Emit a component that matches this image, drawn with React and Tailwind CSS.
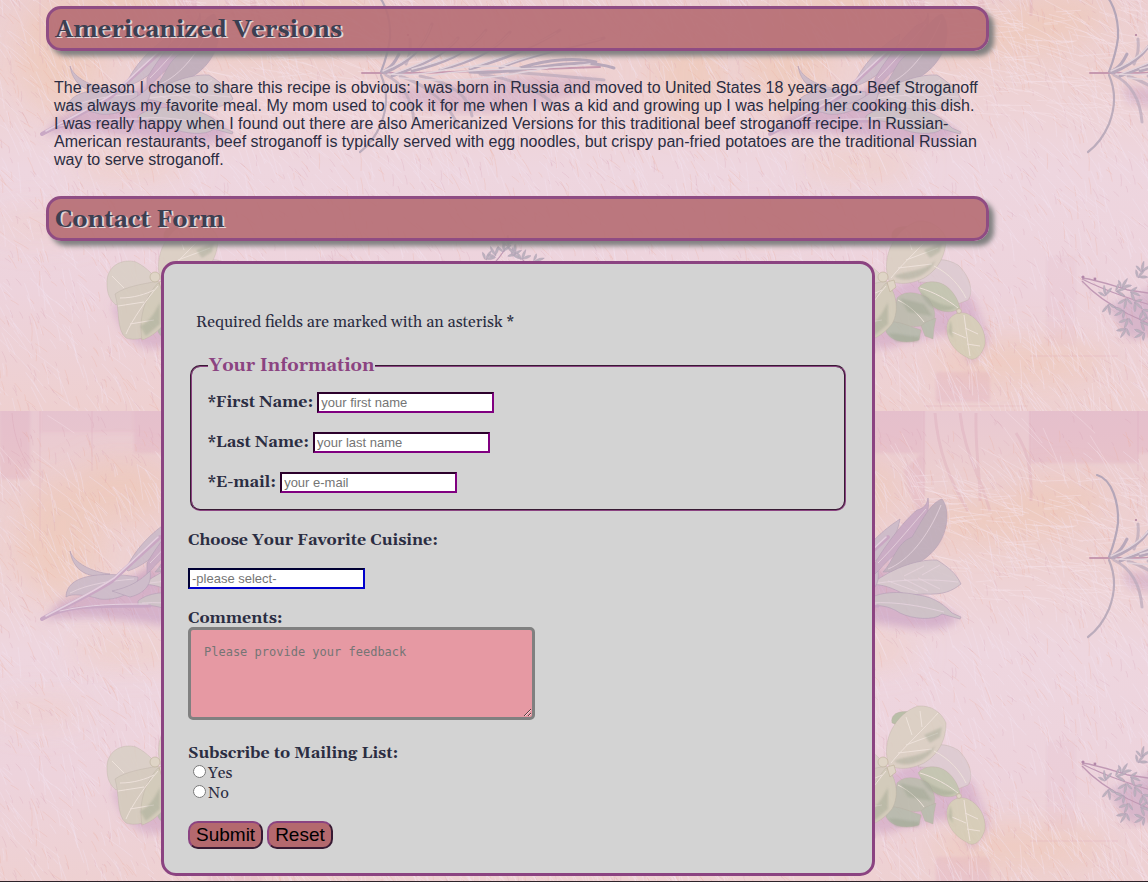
const TILE_W = 728;
const TILE_H = 485;

function makeRandom(seed) {
  let s = seed;
  return () => {
    s = (s * 16807) % 2147483647;
    return s / 2147483647;
  };
}

function scratchPath(seed, count, area, angle, spread, length) {
  const rnd = makeRandom(seed);
  let d = "";
  for (let i = 0; i < count; i++) {
    const x = area[0] + rnd() * area[2];
    const y = area[1] + rnd() * area[3];
    const a = ((angle + (rnd() - 0.5) * spread) * Math.PI) / 180;
    const l = length * (0.3 + rnd());
    const dx = Math.cos(a) * l;
    const dy = Math.sin(a) * l;
    d += `M${x.toFixed(1)} ${y.toFixed(1)}q${(dx / 2 + 1).toFixed(1)} ${(dy / 2).toFixed(1)} ${dx.toFixed(1)} ${dy.toFixed(1)}`;
  }
  return d;
}

const fineLight = scratchPath(11, 1700, [-20, 40, 768, 450], 60, 50, 28);
const fineDark = scratchPath(23, 1200, [-20, 0, 768, 485], 60, 60, 9);
const fineOrange = scratchPath(31, 1100, [-20, 20, 768, 460], 60, 60, 14);
const longLight = scratchPath(47, 130, [0, 0, 728, 200], 48, 40, 60);
const crossLight = scratchPath(59, 160, [180, 60, 220, 130], 10, 40, 36);
const lowLight = scratchPath(71, 200, [150, 380, 578, 105], 64, 50, 44);

function Board() {
  return (
    <>
      <rect width={TILE_W} height={TILE_H} fill="url(#wood)" />
      <g fill="#d79db8" opacity="0.24" filter="url(#edge)">
        <rect x="0" y="-8" width="30" height="76" />
        <rect x="40" y="-8" width="94" height="30" opacity="0.6" />
        <rect x="134" y="-8" width="62" height="50" />
        <rect x="302" y="-8" width="108" height="60" />
        <rect x="410" y="-8" width="40" height="50" />
        <rect x="560" y="-8" width="168" height="40" opacity="0.7" />
        <path d="M175 60L196 40V110L185 90Z" />
        <rect x="208" y="446" width="54" height="30" />
        <rect x="318" y="330" width="30" height="90" opacity="0.4" />
      </g>
      <g fill="#f0bf98" opacity="0.3" filter="url(#softer)">
        <ellipse cx="60" cy="130" rx="40" ry="60" />
        <ellipse cx="130" cy="240" rx="60" ry="14" />
        <ellipse cx="270" cy="110" rx="80" ry="20" />
        <ellipse cx="330" cy="90" rx="50" ry="22" />
        <ellipse cx="120" cy="80" rx="50" ry="30" />
        <ellipse cx="690" cy="150" rx="34" ry="50" />
        <ellipse cx="290" cy="435" rx="90" ry="22" />
        <ellipse cx="40" cy="300" rx="50" ry="14" opacity="0.6" />
      </g>
      <g fill="none" stroke="#cf91a6" opacity="0.22">
        <path d="M207 2C210 40 222 70 240 100M232 2C236 40 250 60 262 100M248 2C247 40 252 60 252 90M288 22C300 40 304 60 303 90" strokeWidth="3" />
        <path d="M12 2C14 30 24 50 34 60M40 0V130M92 0V60M196 0V90M302 0V70M410 0V60" />
        <path d="M196 480H300M302 430H390" />
      </g>
      <g fill="none" strokeLinecap="round">
        <path d={fineDark} stroke="#cf8fa6" strokeWidth="0.7" opacity="0.26" />
        <path d={fineOrange} stroke="#e9ab9b" strokeWidth="0.7" opacity="0.34" />
        <path d={fineLight} stroke="#f3e3ee" strokeWidth="0.7" opacity="0.55" />
        <path d={crossLight} stroke="#f5e2ea" strokeWidth="0.7" opacity="0.6" />
        <path d={longLight} stroke="#f4e0e8" strokeWidth="0.8" opacity="0.5" />
        <path d={lowLight} stroke="#f5e2ec" strokeWidth="0.7" opacity="0.6" />
      </g>
    </>
  );
}

function Sage() {
  return (
    <g>
      <path d="M44 210C90 200 150 214 190 218C215 220 228 212 232 206L150 160L60 190Z" fill="#a873ae" opacity="0.42" filter="url(#soft)" />
      <path d="M130 175C150 150 170 120 190 100L214 92L212 130L150 175Z" fill="#b583b2" opacity="0.32" filter="url(#soft)" />
      <g fill="#c9b9c8" stroke="#a893ae" strokeWidth="0.6">
        <path d="M70 140C74 152 92 161 110 163C96 168 74 165 70 140Z" />
        <path d="M66 186C66 164 100 160 138 166C138 182 116 190 100 188C86 184 72 182 66 186Z" />
        <path d="M126 158C134 140 150 122 172 108C168 130 156 150 128 160Z" />
        <path d="M147 152C160 130 178 108 189 99C195 98 199 94 200 87C203 104 192 122 180 132C166 144 158 150 147 164Z" fill="#c5a6c2" />
        <path d="M155 161C166 150 168 132 184 126C194 110 202 92 214 88C222 98 220 120 210 134C198 152 174 162 155 161Z" fill="#bbabb9" />
        <path d="M142 174C160 160 186 148 209 149C220 156 228 162 233 173C224 180 216 184 196 183L178 184C166 178 154 172 142 174Z" fill="#d3c6cb" />
        <path d="M138 190C150 180 172 180 190 184C208 186 218 196 224 202L233 206L232 208L214 203C206 210 184 208 172 202C160 194 150 194 138 195Z" fill="#c9bec5" />
        <path d="M112 180C130 176 140 170 150 160C152 172 146 182 130 186Z" />
      </g>
      <g fill="none" stroke="#e6d4e0" strokeWidth="0.8">
        <path d="M150 172C180 168 204 168 230 171M160 170L190 181M176 168L200 180M190 167L212 178M176 165L196 155M194 164L212 154" />
        <path d="M160 158C180 150 200 126 213 94M142 192C170 190 196 196 216 201M150 152C168 134 184 114 198 98M70 182C90 172 112 170 134 168" />
      </g>
      <g fill="none" stroke="#c3a0c1" strokeLinecap="round">
        <path d="M42 208C64 196 90 184 112 170L160 126" strokeWidth="4" />
        <path d="M42 208C70 192 110 196 150 195" strokeWidth="3" />
        <path d="M46 205C66 194 92 182 114 167L158 126" stroke="#e3cfe0" strokeWidth="1.6" />
        <path d="M60 200C90 193 120 193 148 193" stroke="#e3cfe0" />
      </g>
    </g>
  );
}

function Rosemary() {
  return (
    <g fill="none" strokeLinecap="round">
      <path d="M392 160C440 166 480 150 540 150C580 150 600 152 606 158C560 176 480 200 400 176Z" fill="#b07fb0" opacity="0.35" filter="url(#soft)" />
      <path d="M369 64C384 68 391 92 390 112C388 128 384 138 381 146" stroke="#ab9fb4" strokeWidth="2.2" />
      <path d="M381 149C388 165 388 180 381 198C375 212 368 220 360 226" stroke="#b3a5b6" strokeWidth="2.2" />
      <path d="M362 147H420L600 141" stroke="#c08fa9" strokeWidth="2" />
      <g stroke="#afa1b6" strokeWidth="3">
        <path d="M382 146C392 142 396 134 399 128M384 147C410 136 424 122 432 98M392 150C420 140 444 130 458 112" />
        <path d="M412 145C440 138 470 128 486 104M440 144C470 136 494 126 510 106M470 143C500 134 530 124 560 104" />
        <path d="M500 142C530 128 580 120 604 112M520 142C550 132 580 132 596 136M470 146C520 150 570 128 614 142" />
        <path d="M386 149C400 156 412 170 414 196M400 150C430 160 450 180 458 200M420 150C450 156 470 170 472 190" opacity="0.7" />
        <path d="M480 148C510 152 540 164 556 180M510 146C540 148 580 152 604 154M410 113C411 122 410 130 406 138" opacity="0.7" />
      </g>
      <g stroke="#e0d3dc" strokeWidth="1.5">
        <path d="M383 145C410 134 424 121 431 100M392 148C420 138 444 128 457 113M412 143C440 136 469 127 485 106" />
        <path d="M440 143C470 134 494 124 509 108M470 142C502 130 530 122 556 107M502 140C534 127 570 120 600 113" />
        <path d="M388 148C440 152 450 134 520 142M430 150C480 140 530 146 590 138M400 152C470 158 500 150 548 142" />
      </g>
      <circle cx="408" cy="109" r="1" fill="#a06f91" stroke="none" />
    </g>
  );
}

function Basil() {
  return (
    <g>
      <path d="M112 380C124 420 150 430 170 418L210 410C240 400 236 440 244 438L262 414L244 370L190 350Z" fill="#b57fb4" opacity="0.4" filter="url(#soft)" />
      <g stroke="#a9a08e" strokeOpacity="0.45" strokeWidth="0.7">
        <path d="M164 312C162 304 170 299 182 301L174 316Z" fill="#b0ba9f" />
        <path d="M107 358C106 340 122 332 136 336C148 342 154 350 158 356L136 366L116 379C110 374 107 368 107 358Z" fill="#d8cfc4" />
        <path d="M115 368C126 360 144 358 158 355C168 366 172 384 162 400C152 410 138 416 126 412C116 404 120 384 115 368Z" fill="#d2cabb" />
        <path d="M199 338C206 332 218 332 230 339C242 350 246 366 240 374L230 378C222 362 210 356 190 356Z" fill="#dccad0" />
        <path d="M190 362C196 354 210 354 218 360C226 366 230 374 232 382C222 390 202 386 190 362Z" fill="#bfc3aa" />
        <path d="M169 372C176 364 190 366 200 372C206 380 208 388 206 394C196 404 176 400 164 398Z" fill="#b7b9a9" />
        <path d="M158 396C170 394 180 400 193 404L191 414C178 418 164 416 158 406Z" fill="#b1b7a8" />
        <path d="M158 357C168 364 172 384 164 398C156 408 148 412 142 414C138 390 146 370 158 357Z" fill="#cfcab5" />
        <path d="M161 355C152 330 168 302 190 295C204 294 214 302 218 312C218 334 206 346 196 352C184 358 172 359 161 355Z" fill="#dacfc1" />
        <path d="M219 400C220 390 230 384 240 388C252 394 258 406 257 418C254 430 246 436 240 432C228 426 218 416 219 400Z" fill="#d4cdb5" />
        <path d="M198 396L208 392L206 402L205 413L197 410L193 400Z" fill="#b3b9a8" />
      </g>
      <g fill="none" stroke="#eee4da" strokeWidth="1">
        <path d="M163 352C176 336 196 318 210 302M170 342L204 338M178 334L210 322M184 324L178 306M194 316L192 300" />
        <path d="M126 408C132 394 146 374 158 360M130 398L154 394M120 372C134 372 146 368 154 364M118 380L144 376" />
        <path d="M236 389C238 404 240 418 242 430M237 402L250 408M238 412L224 406M239 418L252 420" />
        <path d="M192 362C206 366 220 374 230 382M170 374C182 380 190 388 196 396M206 340C222 348 232 360 238 372M112 350L124 362" />
      </g>
      <g fill="#86957a" opacity="0.38" filter="url(#tiny)">
        <path d="M166 350C180 344 196 346 208 334C200 352 176 358 166 350Z" />
        <path d="M192 364C202 376 220 382 230 380C216 390 198 384 192 364Z" />
        <path d="M160 408C170 406 184 412 192 410L190 416H168Z" />
        <path d="M222 394C226 402 222 410 228 416L220 406Z" />
        <path d="M172 372L196 378L204 390L180 386Z" />
        <path d="M196 324L214 316L212 326L202 332Z" />
        <path d="M140 400C150 396 156 384 160 376L160 398L146 410Z" />
      </g>
      <g fill="#ddd5c2" stroke="#b3a88c" strokeWidth="0.6">
        <circle cx="155" cy="351" r="5" />
        <path d="M159 356L166 354L168 361L162 366Z" />
        <circle cx="231" cy="385" r="2.4" />
      </g>
    </g>
  );
}

const thymeTwigs = [
  [394, 362, -60], [402, 366, 20], [398, 372, 100], [380, 378, 80], [396, 384, 150], [410, 352, -50],
  [414, 346, -80], [406, 376, 40], [414, 384, 60], [400, 392, 110], [412, 396, 20], [398, 402, 120],
  [416, 406, 150], [420, 368, 10], [424, 356, -40], [430, 378, 60], [378, 370, -100], [388, 366, -20],
  [486, 334, -60], [496, 330, -120], [504, 326, -90], [512, 330, -30], [522, 334, -70], [500, 340, 30],
  [534, 336, -20], [508, 320, -90], [516, 328, -140],
];

function Thyme() {
  return (
    <g>
      <path d="M380 380L430 360V410L400 412Z" fill="#a87bab" opacity="0.38" filter="url(#soft)" />
      <g fill="none" stroke="#b98fae" strokeWidth="1.3">
        <path d="M354 352C370 354 386 360 400 364L440 370M354 353C372 362 396 372 440 384M354 355C366 368 384 380 400 388C414 394 424 400 436 404" />
        <path d="M440 370C470 364 490 346 506 322M440 384C480 380 500 360 524 334" />
      </g>
      <circle cx="355" cy="351" r="1.6" fill="#a97aa0" />
      <circle cx="367" cy="353" r="1.4" fill="#a97aa0" />
      <g fill="#b5adb9" stroke="#9f8fa9" strokeWidth="0.4">
        {thymeTwigs.map(([x, y, r]) => (
          <g key={`${x}-${y}`} transform={`translate(${x} ${y}) rotate(${r})`}>
            <path d="M0 0C3 -2 8 -2 11 0C8 1 3 1 0 0Z" />
            <path d="M1 0C2 3 4 6 7 7C7 4 4 1 1 0ZM0 -1C1 -4 3 -6 5 -7C5 -4 3 -2 0 -1Z" />
          </g>
        ))}
      </g>
    </g>
  );
}

function HerbBackdrop() {
  return (
    <svg aria-hidden="true" className="absolute inset-0 -z-10 h-full w-full">
      <defs>
        <linearGradient id="wood" x1="0" y1="0" x2="0" y2="1">
          <stop offset="0" stopColor="#e9c9d2" />
          <stop offset="0.12" stopColor="#ecced0" />
          <stop offset="0.3" stopColor="#eed1d1" />
          <stop offset="0.5" stopColor="#eed6df" />
          <stop offset="0.75" stopColor="#edd3dc" />
          <stop offset="1" stopColor="#eed0d0" />
        </linearGradient>
        <filter id="tiny"><feGaussianBlur stdDeviation="1" /></filter>
        <filter id="edge"><feGaussianBlur stdDeviation="1.5" /></filter>
        <filter id="soft"><feGaussianBlur stdDeviation="4" /></filter>
        <filter id="softer" x="-50%" y="-50%" width="200%" height="200%"><feGaussianBlur stdDeviation="14" /></filter>
        <pattern id="herbs" x="0" y="-74" width={TILE_W} height={TILE_H} patternUnits="userSpaceOnUse">
          <Board />
          <g opacity="0.85">
            <Sage />
            <Rosemary />
            <Basil />
            <Thyme />
          </g>
        </pattern>
      </defs>
      <rect width="100%" height="100%" fill="url(#herbs)" />
    </svg>
  );
}

function SectionTitle({ children }) {
  return (
    <h2 className="rounded-[15px] border-3 border-[#8f4c83] bg-[#b66f75]/92 px-[6px] pt-1 text-[24px] leading-[35px] font-bold text-[#3d3f50] shadow-[5px_5px_5px_#808080] [text-shadow:2px_1px_0_#e3d5d8]">
      {children}
    </h2>
  );
}

function InfoField({ id, label, type = "text", placeholder }) {
  return (
    <div className="flex h-[21px] items-start gap-1">
      <label htmlFor={id} className="leading-[21px] font-bold">
        *{label}:
      </label>
      <input
        id={id}
        type={type}
        placeholder={placeholder}
        className="h-[21px] w-[177px] border-2 border-[purple] bg-white px-[2px] font-['Liberation_Sans',Arial,sans-serif] text-[13px] [border-style:inset] placeholder:text-[#757575]"
      />
    </div>
  );
}

const buttonClass =
  "h-7 rounded-[10px] border-2 border-[#8b4381] bg-[#b4696e] px-[6px] font-['Liberation_Sans',Arial,sans-serif] text-[19px] leading-6 text-black [border-style:outset]";

function ContactForm() {
  return (
    <form
      onSubmit={(e) => e.preventDefault()}
      className="mt-5 mr-[114px] ml-[115px] rounded-[15px] border-3 border-[#8b4381] bg-[#d3d3d3] px-6 pt-[47px] pb-6 leading-[22px]"
    >
      <p className="h-5 px-2">Required fields are marked with an asterisk *</p>

      <fieldset className="mx-[2px] mt-[23px] rounded-[10px] border-2 border-[#8b4381] px-4 pb-4 [border-style:groove]">
        <legend className="px-px text-[18px] leading-6 font-bold text-[#8b4381]">Your Information</legend>
        <div className="flex flex-col gap-[19px] pt-[14px]">
          <InfoField id="first-name" label="First Name" placeholder="your first name" />
          <InfoField id="last-name" label="Last Name" placeholder="your last name" />
          <InfoField id="email" label="E-mail" type="email" placeholder="your e-mail" />
        </div>
      </fieldset>

      <label htmlFor="cuisine" className="mt-[18px] block h-5 font-bold">
        Choose Your Favorite Cuisine:
      </label>
      <input
        id="cuisine"
        list="cuisines"
        placeholder="-please select-"
        className="mt-[19px] block h-[21px] w-[177px] border-2 border-t-[#000033] border-r-[mediumblue] border-b-[mediumblue] border-l-[#000033] bg-white px-[2px] font-['Liberation_Sans',Arial,sans-serif] text-[13px] placeholder:text-[#757575]"
      />
      <datalist id="cuisines">
        <option value="Russian" />
        <option value="American" />
        <option value="Italian" />
      </datalist>

      <label htmlFor="comments" className="mt-[18px] block h-5 font-bold">
        Comments:
      </label>
      <textarea
        id="comments"
        placeholder="Please provide your feedback"
        className="block h-[93px] w-[347px] rounded-[5px] border-3 border-[gray] bg-[#e699a3] px-[13px] py-[14px] font-['DejaVu_Sans_Mono',monospace] text-[12px] leading-4 placeholder:text-[#757575]"
      />

      <div role="radiogroup" aria-labelledby="mailing" className="mt-[22px]">
        <p id="mailing" className="h-5 font-bold">Subscribe to Mailing List:</p>
        <label className="flex h-5 items-start gap-[2px] pl-[5px]">
          <input type="radio" name="mailing" value="yes" className="mt-[3px] size-[13px]" />
          Yes
        </label>
        <label className="flex h-5 items-start gap-[2px] pl-[5px]">
          <input type="radio" name="mailing" value="no" className="mt-[3px] size-[13px]" />
          No
        </label>
      </div>

      <div className="mt-[19px] flex gap-1">
        <button type="submit" className={buttonClass}>Submit</button>
        <button type="reset" className={buttonClass}>Reset</button>
      </div>
    </form>
  );
}

export default function App() {
  return (
    <div className="relative isolate overflow-hidden border-b border-[#2e2329] pt-[6px] pb-[5px] font-[Georgia,Gelasio,'DejaVu_Serif',serif] text-[16px] text-[#2b2d42]">
      <HerbBackdrop />
      <main className="mr-[159px] ml-[46px]">
        <SectionTitle>Americanized Versions</SectionTitle>
        <p className="mt-7 mb-[27px] px-2 font-['Liberation_Sans',Arial,sans-serif] leading-[18px]">
          The reason I chose to share this recipe is obvious: I was born in Russia and moved to United States 18 years
          ago. Beef Stroganoff was always my favorite meal. My mom used to cook it for me when I was a kid and growing
          up I was helping her cooking this dish. I was really happy when I found out there are also Americanized
          Versions for this traditional beef stroganoff recipe. In Russian-American restaurants, beef stroganoff is
          typically served with egg noodles, but crispy pan-fried potatoes are the traditional Russian way to serve
          stroganoff.
        </p>
        <SectionTitle>Contact Form</SectionTitle>
        <ContactForm />
      </main>
    </div>
  );
}
